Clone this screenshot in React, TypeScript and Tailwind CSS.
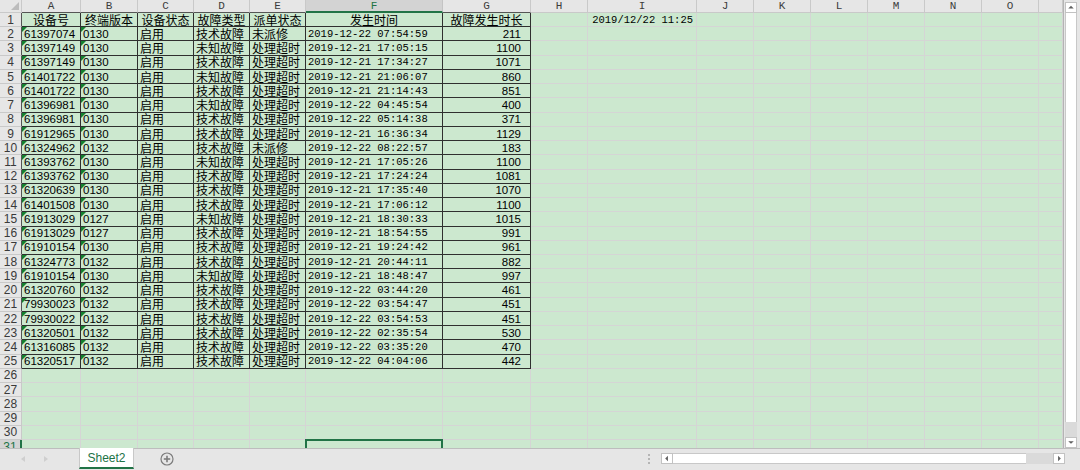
import React from "react";

const COLS = ["A", "B", "C", "D", "E", "F", "G", "H", "I", "J", "K", "L", "M", "N", "O", ""];

const HEAD = ["设备号", "终端版本", "设备状态", "故障类型", "派单状态", "发生时间", "故障发生时长"];

const DATA: string[][] = [
  ["61397074", "0130", "启用", "技术故障", "未派修", "2019-12-22 07:54:59", "211"],
  ["61397149", "0130", "启用", "未知故障", "处理超时", "2019-12-21 17:05:15", "1100"],
  ["61397149", "0130", "启用", "技术故障", "处理超时", "2019-12-21 17:34:27", "1071"],
  ["61401722", "0130", "启用", "未知故障", "处理超时", "2019-12-21 21:06:07", "860"],
  ["61401722", "0130", "启用", "技术故障", "处理超时", "2019-12-21 21:14:43", "851"],
  ["61396981", "0130", "启用", "未知故障", "处理超时", "2019-12-22 04:45:54", "400"],
  ["61396981", "0130", "启用", "技术故障", "处理超时", "2019-12-22 05:14:38", "371"],
  ["61912965", "0130", "启用", "技术故障", "处理超时", "2019-12-21 16:36:34", "1129"],
  ["61324962", "0132", "启用", "技术故障", "未派修", "2019-12-22 08:22:57", "183"],
  ["61393762", "0130", "启用", "未知故障", "处理超时", "2019-12-21 17:05:26", "1100"],
  ["61393762", "0130", "启用", "技术故障", "处理超时", "2019-12-21 17:24:24", "1081"],
  ["61320639", "0130", "启用", "技术故障", "处理超时", "2019-12-21 17:35:40", "1070"],
  ["61401508", "0130", "启用", "技术故障", "处理超时", "2019-12-21 17:06:12", "1100"],
  ["61913029", "0127", "启用", "未知故障", "处理超时", "2019-12-21 18:30:33", "1015"],
  ["61913029", "0127", "启用", "技术故障", "处理超时", "2019-12-21 18:54:55", "991"],
  ["61910154", "0130", "启用", "技术故障", "处理超时", "2019-12-21 19:24:42", "961"],
  ["61324773", "0132", "启用", "技术故障", "处理超时", "2019-12-21 20:44:11", "882"],
  ["61910154", "0130", "启用", "未知故障", "处理超时", "2019-12-21 18:48:47", "997"],
  ["61320760", "0132", "启用", "技术故障", "处理超时", "2019-12-22 03:44:20", "461"],
  ["79930023", "0132", "启用", "技术故障", "处理超时", "2019-12-22 03:54:47", "451"],
  ["79930022", "0132", "启用", "技术故障", "处理超时", "2019-12-22 03:54:53", "451"],
  ["61320501", "0132", "启用", "技术故障", "处理超时", "2019-12-22 02:35:54", "530"],
  ["61316085", "0132", "启用", "技术故障", "处理超时", "2019-12-22 03:35:20", "470"],
  ["61320517", "0132", "启用", "技术故障", "处理超时", "2019-12-22 04:04:06", "442"],
];

const SANS = "font-['Liberation_Sans','Noto_Sans_CJK_SC',sans-serif]";
const CJK = "font-['Noto_Sans_CJK_SC','Liberation_Sans',sans-serif]";
const MONO = "font-['Liberation_Mono','Noto_Sans_CJK_SC',monospace]";

function Triangle() {
  return (
    <span className="absolute left-0 top-0 w-0 h-0 border-t-[5px] border-r-[5px] border-t-[#14802f] border-r-transparent" />
  );
}

function ColHeader({ i }: { i: number }) {
  const letter = COLS[i];
  if (letter === "F") {
    return (
      <div className={`flex items-center justify-center bg-[#d3d3d3] text-[#217346] text-[11px] leading-[12px] border-r border-[#c4c4c4] border-b-2 border-b-[#217346] ${MONO}`}>
        {letter}
      </div>
    );
  }
  const inData = i <= 6;
  return (
    <div
      className={`flex items-center justify-center bg-[#e6e6e6] text-[#3c3c3c] text-[11px] leading-[12px] border-r border-r-[#c9c9c9] border-b ${
        inData ? "border-b-[#555555]" : "border-b-[#c9c9c9]"
      } ${MONO}`}
    >
      {letter}
    </div>
  );
}

function RowHeader({ r }: { r: number }) {
  if (r === 31) {
    return (
      <div className={`flex items-center justify-center bg-[#d3d3d3] text-[#217346] text-[12px] leading-[14px] border-b border-b-[#c9c9c9] border-r-2 border-r-[#217346] ${SANS}`}>
        {r}
      </div>
    );
  }
  return (
    <div
      className={`flex items-center justify-center bg-[#e6e6e6] text-[#3a3a3a] text-[12px] leading-[14px] border-b border-b-[#c9c9c9] border-r ${
        r <= 25 ? "border-r-[#555555]" : "border-r-[#c9c9c9]"
      } ${SANS}`}
    >
      {r}
    </div>
  );
}

function Cell({ r, c }: { r: number; c: number }) {
  const isData = r <= 25 && c <= 6;
  const border = isData
    ? "border-r border-b border-[#2f2f2f]"
    : "border-r border-b border-[#d5d5d5]";

  if (r === 31 && c === 5) {
    return (
      <div className={`relative ${border}`}>
        <div className="absolute -left-px -top-px -right-px -bottom-px border-2 border-[#217346]" />
      </div>
    );
  }

  if (r === 1 && c === 8) {
    return (
      <div className={`flex items-center justify-end pr-[3px] text-[10.5px] leading-[14px] text-black whitespace-nowrap ${MONO} ${border}`}>
        2019/12/22 11:25
      </div>
    );
  }

  if (!isData) return <div className={border} />;

  if (r === 1) {
    return (
      <div className={`flex items-center justify-center text-[12px] leading-[14px] text-black whitespace-nowrap ${CJK} ${border}`}>
        {HEAD[c]}
      </div>
    );
  }

  const v = DATA[r - 2][c];
  if (c === 0 || c === 1) {
    return (
      <div className={`relative flex items-center pl-[2px] text-[11.5px] leading-[14px] text-black whitespace-nowrap ${SANS} ${border}`}>
        <Triangle />
        {v}
      </div>
    );
  }
  if (c === 5) {
    return (
      <div className={`flex items-center pl-[2px] text-[10.5px] leading-[14px] text-black whitespace-nowrap ${MONO} ${border}`}>
        {v}
      </div>
    );
  }
  if (c === 6) {
    return (
      <div className={`flex items-center justify-end pr-[9px] text-[11.5px] leading-[14px] text-black whitespace-nowrap ${SANS} ${border}`}>
        {v}
      </div>
    );
  }
  return (
    <div className={`flex items-center pl-[2px] text-[12px] leading-[14px] text-black whitespace-nowrap ${CJK} ${border}`}>
      {v}
    </div>
  );
}

function ArrowBox({ dir }: { dir: "up" | "down" | "left" | "right" }) {
  const pts =
    dir === "up"
      ? "2.5,6.5 8.5,6.5 5.5,3.5"
      : dir === "down"
      ? "2.5,4 8.5,4 5.5,7"
      : dir === "left"
      ? "6.5,2.5 6.5,8.5 3.5,5.5"
      : "4.5,2.5 4.5,8.5 7.5,5.5";
  return (
    <div className="w-[12px] h-[11px] bg-white border border-[#c2c2c2] flex items-center justify-center">
      <svg width="11" height="11" viewBox="0 0 11 11">
        <polygon points={pts} fill="#606060" />
      </svg>
    </div>
  );
}

export default function App() {
  const rows = Array.from({ length: 31 }, (_, i) => i + 1);
  return (
    <div className="w-[1080px] h-[470px] bg-[#e6e6e6] flex flex-col overflow-hidden">
      <div className="flex h-[448px]">
        <div className="w-[1064px] h-[448px] overflow-hidden bg-[#cce8cf] border-r border-[#b4b4b4]">
          <div className="grid grid-cols-[22px_59px_57px_56px_56px_56px_137px_88px_57px_109px_57px_57px_57px_57px_57px_57px_24px] grid-rows-[13px_repeat(31,14.24px)] w-[1063px]">
            <div className="relative bg-[#e6e6e6] border-r border-b border-[#c9c9c9]">
              <svg className="absolute right-[2px] bottom-[2px]" width="8" height="8" viewBox="0 0 8 8">
                <polygon points="8,0 8,8 0,8" fill="#bcbcbc" />
              </svg>
            </div>
            {COLS.map((_, i) => (
              <ColHeader key={`h${i}`} i={i} />
            ))}
            {rows.map((r) => (
              <React.Fragment key={r}>
                <RowHeader r={r} />
                {COLS.map((_, c) => (
                  <Cell key={`${r}-${c}`} r={r} c={c} />
                ))}
              </React.Fragment>
            ))}
          </div>
        </div>
        <div className="w-[16px] h-[448px] flex flex-col pl-[1px] pr-[3px] pt-[2px]">
          <ArrowBox dir="up" />
          <div className="flex-1 bg-white border-x border-[#c8c8c8]" />
          <div className="h-[15px] bg-[#dadada]" />
          <ArrowBox dir="down" />
        </div>
      </div>
      <div className="h-[22px] border-t border-[#bdbdbd] flex items-start">
        <div className="w-[79px] h-[20px] flex items-center">
          <svg className="ml-[20px]" width="7" height="8" viewBox="0 0 7 8">
            <polygon points="5,1 5,7 1,4" fill="#cfcfcf" />
          </svg>
          <svg className="ml-[15px]" width="7" height="8" viewBox="0 0 7 8">
            <polygon points="2,1 2,7 6,4" fill="#cfcfcf" />
          </svg>
        </div>
        <div className={`w-[55px] h-[21px] -mt-px bg-white border-x border-[#c8c8c8] border-b-2 border-b-[#217346] flex items-center justify-center text-[12px] text-[#217346] ${SANS}`}>
          Sheet2
        </div>
        <div className="ml-[26px] mt-[3px]">
          <svg width="14" height="14" viewBox="0 0 14 14">
            <circle cx="7" cy="7" r="6" fill="none" stroke="#7c7c7c" strokeWidth="1.2" />
            <line x1="7" y1="3.8" x2="7" y2="10.2" stroke="#7c7c7c" strokeWidth="1.6" />
            <line x1="3.8" y1="7" x2="10.2" y2="7" stroke="#7c7c7c" strokeWidth="1.6" />
          </svg>
        </div>
        <div className="flex-1" />
        <div className="mt-[5px] mr-[11px] flex flex-col gap-[2px]">
          <span className="block w-[2px] h-[2px] bg-[#b5b5b5]" />
          <span className="block w-[2px] h-[2px] bg-[#b5b5b5]" />
          <span className="block w-[2px] h-[2px] bg-[#b5b5b5]" />
        </div>
        <div className="mt-[4px] mr-[15px] flex w-[404px] h-[11px]">
          <ArrowBox dir="left" />
          <div className="w-[353px] h-[11px] bg-white border-y border-[#c8c8c8]" />
          <div className="flex-1 h-[11px] bg-[#dadada]" />
          <ArrowBox dir="right" />
        </div>
      </div>
    </div>
  );
}
